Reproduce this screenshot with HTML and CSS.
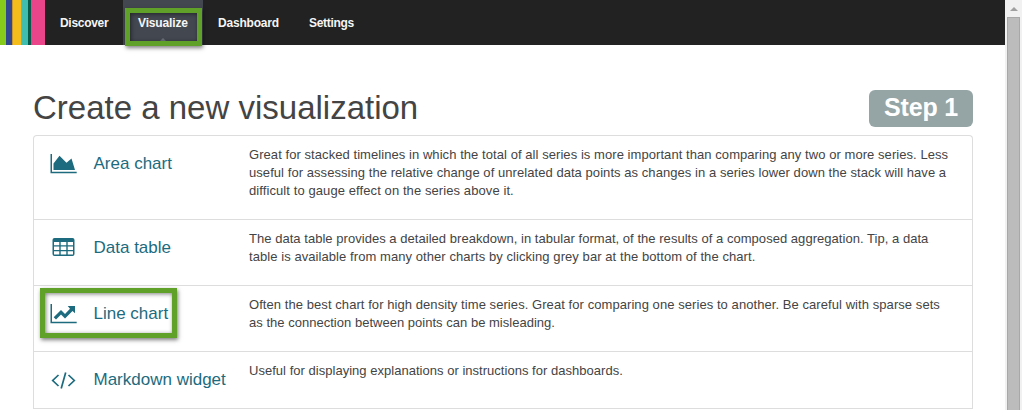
FILE: index.html
```html
<!DOCTYPE html>
<html lang="en">
<head>
<meta charset="utf-8">
<title>Visualize</title>
<link rel="stylesheet" href="styles.css">
</head>
<body>
<div class="app">
  <div class="page">
    <nav class="navbar">
      <div class="logo"><i class="lime"></i><i class="blue"></i><i class="yellow"></i><i class="teal"></i><i class="green"></i><i class="pink"></i></div>
      <a class="tab discover">Discover</a>
      <a class="tab active">Visualize<span class="highlight nav-highlight"></span></a>
      <a class="tab dashboard">Dashboard</a>
      <a class="tab settings">Settings</a>
    </nav>
    <main class="content">
      <header class="heading">
        <h1>Create a new visualization</h1>
        <span class="step">Step 1</span>
      </header>
      <div class="list">
        <div class="row area">
          <svg class="icon" width="28" height="22" viewBox="0 0 28 22"><path d="M.5 1H2v17.700h24.700V20.200H.5z"/><path d="M3.500 17V10.500l6-7.700 7 7 5-4.200L25 17z"/></svg>
          <span class="name">Area chart</span>
          <p class="desc"><span class="a1">Great for stacked timelines in which the total of all series is more important than comparing any two or more series. Less</span><br><span class="a2">useful for assessing the relative change of unrelated data points as changes in a series lower down the stack will have a</span><br><span class="a3">difficult to gauge effect on the series above it.</span></p>
        </div>
        <div class="row">
          <svg class="icon" width="28" height="22" viewBox="0 0 28 22"><path fill-rule="evenodd" d="M4.500 1h18q2 0 2 2v14q0 2-2 2h-18q-2 0-2-2V3q0-2 2-2zM4 5v3.200h5.300V5zm6.700 0v3.200h5.600V5zm7 0v3.200H23V5zM4 9.600v3.300h5.300V9.600zm6.700 0v3.300h5.600V9.600zm7 0v3.300H23V9.600zM4 14.300v3.200h5.300v-3.200zm6.700 0v3.200h5.600v-3.200zm7 0v3.200H23v-3.200z"/></svg>
          <span class="name">Data table</span>
          <p class="desc"><span class="b1">The data table provides a detailed breakdown, in tabular format, of the results of a composed aggregation. Tip, a data</span><br><span class="b2">table is available from many other charts by clicking grey bar at the bottom of the chart.</span></p>
        </div>
        <div class="row">
          <svg class="icon" width="28" height="22" viewBox="0 0 28 22"><path d="M.5 1H2v17.700h24.700V20.200H.5z"/><path d="M3.700 14.200l7.300-7.300 4 4 5-5.200L17.700 3H25v7.200l-2.500-2.300L15 15.500l-4-4-5 5z"/></svg>
          <span class="name">Line chart</span>
          <p class="desc"><span class="c1">Often the best chart for high density time series. Great for comparing one series to another. Be careful with sparse sets</span><br><span class="c2">as the connection between points can be misleading.</span></p>
          <span class="highlight row-highlight"></span>
        </div>
        <div class="row markdown">
          <svg class="icon stroke" width="28" height="22" viewBox="0 0 28 22"><path d="M8.500 6L2.700 11.500 8.500 17M18.500 6l5.800 5.500L18.500 17M15.700 3.500L11.200 19.500"/></svg>
          <span class="name">Markdown widget</span>
          <p class="desc"><span class="d1">Useful for displaying explanations or instructions for dashboards.</span></p>
        </div>
      </div>
    </main>
  </div>
  <div class="scrollbar"><span class="arrow"></span><span class="thumb"></span></div>
</div>
</body>
</html>
```
FILE: styles.css
```css
* { box-sizing: border-box; }
body { margin: 0; overflow: hidden; background: #fff; color: #444; font-family: "Liberation Sans", Arial, sans-serif; }
.app { display: flex; width: 1022px; height: 410px; overflow: hidden; }
.page { width: 1005px; }
.navbar { display: flex; height: 45px; background: #222; }
.logo { display: flex; width: 45px; height: 45px; }
.logo i { height: 45px; }
.lime { width: 6px; background: #86cb1c; }
.blue { width: 6px; background: #30478f; }
.yellow { width: 9px; background: #f3bc1b; border-left: 1px solid #c8962b; }
.teal { width: 7px; background: #3fbeb0; border-left: 1px solid #8dae67; }
.green { width: 3px; background: #075b4b; }
.pink { width: 14px; background: #ea458b; }
.tab { position: relative; height: 45px; padding-left: 15px; font-size: 12px; font-weight: bold; line-height: 46px; color: #f5f5f5; white-space: nowrap; }
.discover { width: 78px; letter-spacing: -0.3px; }
.active { width: 80px; background: #434750; letter-spacing: -0.15px; }
.active::before { content: ""; position: absolute; left: 37px; bottom: 4px; border: 3px solid transparent; border-top: 0; border-bottom-color: #6c7078; }
.dashboard { width: 91px; letter-spacing: -0.2px; }
.settings { letter-spacing: -0.3px; }
.highlight { position: absolute; border: 5px solid #60a229; box-shadow: 1px 2px 4px rgba(0,0,0,.5), inset 1px 1px 4px rgba(0,0,0,.5); }
.nav-highlight { left: 2px; top: 8px; width: 77px; height: 38px; z-index: 2; }
.row-highlight { left: 6px; top: 2px; width: 137px; height: 50px; }
.content { padding: 45px 32px 0 33px; }
.heading { display: flex; justify-content: space-between; height: 45px; }
h1 { margin: 0; font-size: 33px; line-height: 35px; font-weight: normal; white-space: nowrap; }
.step { width: 104px; height: 37px; border-radius: 6px; background: #95a5a6; color: #fff; font-size: 25px; font-weight: bold; line-height: 35px; letter-spacing: -0.2px; text-align: center; }
.list { border: 1px solid #ddd; border-bottom: 0; border-radius: 4px 4px 0 0; }
.row { position: relative; display: flex; height: 66px; padding: 17px 0 0 16px; border-bottom: 1px solid #ddd; }
.area { height: 84px; }
.markdown { height: 57px; }
.icon { flex: none; fill: #1d6b7e; }
.stroke { fill: none; stroke: #1d6b7e; stroke-width: 1.7; }
.name { flex: none; width: 171px; padding-left: 15.5px; font-size: 17px; line-height: 22px; color: #1d6b7e; white-space: nowrap; }
.desc { margin: -7px 0 0; font-size: 13px; line-height: 18px; white-space: nowrap; }
.a1 { letter-spacing: 0.063px; }
.a2 { letter-spacing: 0.058px; }
.a3 { letter-spacing: 0.09px; }
.b1 { letter-spacing: 0.037px; }
.b2 { letter-spacing: 0.07px; }
.c1 { letter-spacing: 0.067px; }
.c2 { letter-spacing: 0.02px; }
.d1 { letter-spacing: 0.025px; }
.scrollbar { width: 17px; height: 410px; padding: 7px 2px 0; background: #f1f1f1; }
.arrow { display: block; width: 0; height: 0; margin-left: 3px; border: 4px solid transparent; border-top: 0; border-bottom-color: #a0a0a0; }
.thumb { display: block; width: 13px; height: 394px; margin-top: 6px; background: #bcbcbc; border: 1px solid #a8a8a8; }
```
